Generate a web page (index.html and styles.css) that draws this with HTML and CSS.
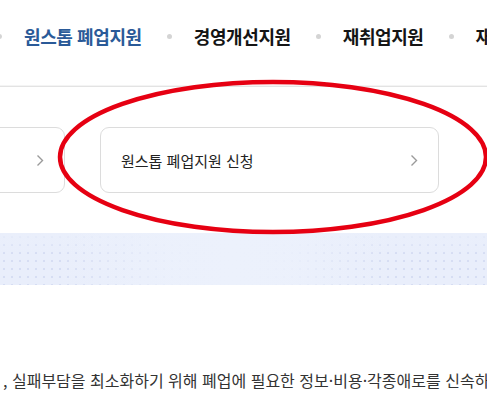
FILE: index.html
```html
<!DOCTYPE html>
<html lang="ko">
<head>
<meta charset="utf-8">
<link rel="stylesheet" href="styles.css">
</head>
<body>
<div class="page">
  <nav class="nav">
    <span class="dot first"></span>
    <a class="nav-item active">원스톱 폐업지원</a>
    <span class="dot"></span>
    <a class="nav-item">경영개선지원</a>
    <span class="dot"></span>
    <a class="nav-item">재취업지원</a>
    <span class="dot"></span>
    <a class="nav-item">재기교육</a>
  </nav>

  <div class="cards">
    <a class="card card-prev">
      <span class="card-label">점포철거비 지원 신청</span>
      <svg class="chev" width="8" height="13" viewBox="0 0 8 13"><polyline points="1.5,1.5 6.5,6.5 1.5,11.5" fill="none" stroke="#9a9a9a" stroke-width="1.4"/></svg>
    </a>
    <a class="card">
      <span class="card-label">원스톱 폐업지원 신청</span>
      <svg class="chev" width="8" height="13" viewBox="0 0 8 13"><polyline points="1.5,1.5 6.5,6.5 1.5,11.5" fill="none" stroke="#9a9a9a" stroke-width="1.4"/></svg>
    </a>
  </div>

  <div class="banner"></div>

  <p class="desc">, 실패부담을 최소화하기 위해 폐업에 필요한 정보·비용·각종애로를 신속하게 지원합니다.</p>

  <svg class="mark" width="487" height="393" viewBox="0 0 487 393">
    <ellipse cx="273" cy="157" rx="213" ry="75" fill="none" stroke="#e60012" stroke-width="4.5"/>
  </svg>
</div>
</body>
</html>
```

FILE: styles.css
```css
html, body {
  margin: 0;
  padding: 0;
  background: #ffffff;
  overflow: hidden;
}

.page {
  position: relative;
  width: 487px;
  height: 393px;
  overflow: hidden;
  font-family: "Noto Sans CJK KR", "Noto Sans", sans-serif;
}

.nav {
  display: flex;
  align-items: center;
  height: 72px;
  padding: 0 0 14px 0;
  border-bottom: 1px solid #e3e3e3;
  box-shadow: 0 -5px 0 -4px #f4f4f4 inset;
  white-space: nowrap;
}

.dot {
  flex: none;
  width: 5px;
  height: 5px;
  border-radius: 50%;
  background: #d4d4d4;
}

.dot.first {
  margin-left: -3px;
}

.nav-item {
  flex: none;
  margin: 0 25px 0 22px;
  font-size: 18px;
  font-weight: 700;
  letter-spacing: -0.4px;
  color: #151515;
}

.nav-item.active {
  color: #2a5a98;
}

.cards {
  display: flex;
  gap: 35px;
  margin: 40px 0 0 -274px;
}

.card {
  flex: none;
  box-sizing: border-box;
  width: 339px;
  height: 66px;
  display: flex;
  align-items: center;
  justify-content: space-between;
  padding: 0 20px 0 20px;
  border: 1px solid #dcdcdc;
  border-radius: 9px;
  background: #fff;
}

.card-label {
  font-size: 15px;
  color: #222;
}

.chev {
  display: block;
}

.banner {
  margin-top: 40px;
  height: 52px;
  background:
    linear-gradient(90deg, rgba(236,241,252,0) 0%, rgba(236,241,252,0) 12%, rgba(236,241,252,0.85) 35%, #ecf1fc 48%, rgba(236,241,252,0.85) 60%, rgba(236,241,252,0) 80%),
    linear-gradient(180deg, rgba(234,239,251,0.9) 0%, rgba(234,239,251,0) 40%),
    radial-gradient(circle, #d6ddf3 1px, transparent 1.6px) 0 0 / 8px 8px,
    #e9eefb;
}

.desc {
  margin: 84px 0 0 3px;
  font-size: 16px;
  line-height: 22px;
  color: #333;
  white-space: nowrap;
}

.mark {
  position: absolute;
  left: 0;
  top: 0;
  pointer-events: none;
}
```
